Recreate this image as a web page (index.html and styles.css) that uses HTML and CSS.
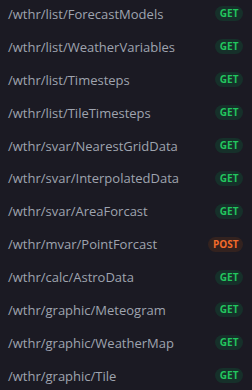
FILE: index.html
```html
<!DOCTYPE html>
<html>
<head>
<meta charset="utf-8">
<link rel="stylesheet" href="styles.css">
</head>
<body>
<ul class="list">
  <li class="row"><span class="path">/wthr/list/ForecastModels</span><span class="badge get">GET</span></li>
  <li class="row"><span class="path">/wthr/list/WeatherVariables</span><span class="badge get">GET</span></li>
  <li class="row"><span class="path">/wthr/list/Timesteps</span><span class="badge get">GET</span></li>
  <li class="row"><span class="path">/wthr/list/TileTimesteps</span><span class="badge get">GET</span></li>
  <li class="row"><span class="path">/wthr/svar/NearestGridData</span><span class="badge get">GET</span></li>
  <li class="row"><span class="path">/wthr/svar/InterpolatedData</span><span class="badge get">GET</span></li>
  <li class="row"><span class="path">/wthr/svar/AreaForcast</span><span class="badge get">GET</span></li>
  <li class="row"><span class="path">/wthr/mvar/PointForcast</span><span class="badge post">POST</span></li>
  <li class="row"><span class="path">/wthr/calc/AstroData</span><span class="badge get">GET</span></li>
  <li class="row"><span class="path">/wthr/graphic/Meteogram</span><span class="badge get">GET</span></li>
  <li class="row"><span class="path">/wthr/graphic/WeatherMap</span><span class="badge get">GET</span></li>
  <li class="row"><span class="path">/wthr/graphic/Tile</span><span class="badge get">GET</span></li>
</ul>
</body>
</html>
```
FILE: styles.css
```css
html, body {
  margin: 0;
  padding: 0;
  background: #1b1a23;
  overflow: hidden;
}
.list {
  list-style: none;
  margin: -2.5px 0 0 0;
  padding: 0 9px 0 8px;
}
.row {
  height: 32.9px;
  display: flex;
  align-items: center;
  justify-content: space-between;
}
.path {
  font-family: "Open Sans", sans-serif;
  font-size: 13px;
  color: #9fa4af;
}
.badge {
  font-family: "Open Sans", sans-serif;
  font-weight: 700;
  font-size: 10px;
  line-height: 15px;
  height: 15px;
  padding: 0 4.5px;
  border-radius: 8px;
}
.get {
  color: #22c55e;
  background: #16302a;
}
.post {
  color: #f26b2a;
  background: #33221f;
}
```
